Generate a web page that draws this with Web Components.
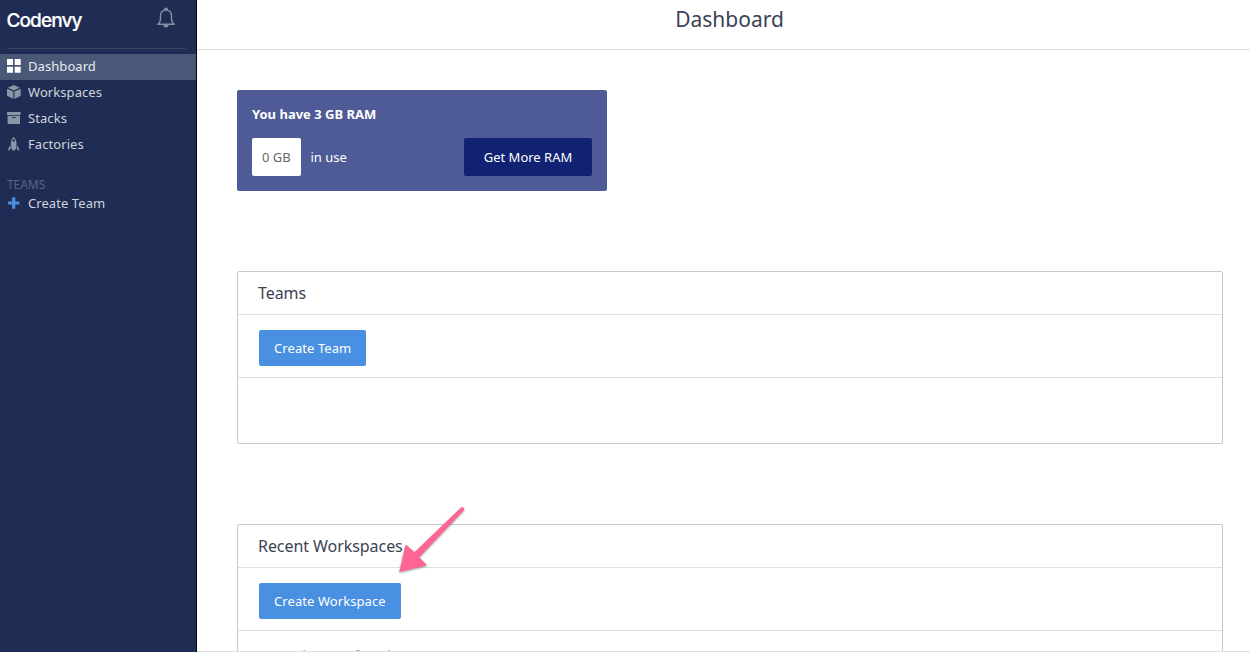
<!DOCTYPE html>
<html lang="en">
<head>
<meta charset="utf-8">
<title>Dashboard</title>
<style>
html,body{margin:0;height:100%;overflow:hidden}
body{font-family:"Noto Sans","Open Sans",sans-serif;font-size:13px;color:#3b4254}
</style>
</head>
<body>
<app-shell>
  <side-bar slot="nav">
    <nav-item active icon="grid">Dashboard</nav-item>
    <nav-item icon="cube">Workspaces</nav-item>
    <nav-item icon="box">Stacks</nav-item>
    <nav-item icon="rocket">Factories</nav-item>
    <nav-item slot="teams" icon="plus">Create Team</nav-item>
  </side-bar>
  <page-header>Dashboard</page-header>
  <ram-card></ram-card>
  <list-panel style="height:171px;margin-top:80px" heading="Teams" action="Create Team"></list-panel>
  <list-panel style="height:250px;margin-top:80px" heading="Recent Workspaces" action="Create Workspace">No workspaces found.</list-panel>
</app-shell>
<pointer-arrow></pointer-arrow>
<script>
const define = (name, html, setup) => customElements.define(name, class extends HTMLElement {
  constructor() {
    super();
    this.attachShadow({mode: 'open'}).innerHTML = html;
  }
  connectedCallback() { if (setup) setup(this, this.shadowRoot); }
});

define('app-shell', `<style>
:host{display:flex;height:652px;box-sizing:border-box;overflow:hidden}
main{flex:1;height:651px;overflow:hidden;border-bottom:1px solid #e0e0e0;background:#fff}
</style><slot name="nav"></slot><main><slot></slot></main>`);

define('side-bar', `<style>
:host{display:block;width:196px;flex:none;background:#1f2d54;border-right:1px solid #02040a}
header{display:flex;justify-content:space-between;height:48px;margin:0 10px 5px 7px;border-bottom:1px solid #3b4360}
.logo{font:500 19px/24px Inter,"Liberation Sans",sans-serif;letter-spacing:-.9px;color:#fff;-webkit-text-stroke:.2px #fff;margin-left:-.5px;padding-top:9px}
.bell{margin:7px 9px 0 0;width:22px;height:22px}
h2{font-size:12px;font-weight:400;line-height:16px;color:#5a6480;margin:19px 0 -2px 7px;letter-spacing:-.05px}
</style>
<header><span class="logo">Codenvy</span>
<svg class="bell" viewBox="0 0 22 22" fill="none" stroke="#8692a4" stroke-width="1.4"><path d="M9.8 3.2V2.5a1.2 1.2 0 0 1 2.4 0v.7M2.7 17.3c2.1-1.4 2.8-3.4 2.8-5.6V8.5C5.5 5.2 7.8 3 11 3s5.5 2.2 5.5 5.5v3.2c0 2.2.7 4.2 2.8 5.6z" stroke-linejoin="round"/><path d="M8.5 18a2.5 2.5 0 0 0 5 0z" fill="#8692a4" stroke="none"/></svg></header>
<nav><slot></slot></nav><h2>TEAMS</h2><slot name="teams"></slot>`);

const icons = {
  grid: '<path fill="#fff" d="M0 0h6v6H0zM7.7 0H13.7v6H7.7zM0 7.8h6V13.8H0zM7.7 7.8H13.7V13.8H7.7z"/>',
  cube: '<path fill="#8a95a5" d="M6.8 0l6 2.8-6 2.7-6-2.7zM0 3.8l6.3 2.8V14L0 10.8zM13.7 3.8L7.4 6.6V14l6.3-3.2z"/>',
  box: '<path fill="#8a95a5" d="M0 1h13.6v3H0zM.6 4.8H13V13H.6z"/><path fill="#1f2d54" d="M5 6h3.6v1H5z"/>',
  rocket: '<g transform="translate(-.3 0)"><path fill="#8a95a5" fill-rule="evenodd" d="M7 0C4.7 1.8 4 4.6 4.2 8L2 10.5 1.4 14l2.8-2h1L6 13.4h2l.8-1.4h1l2.8 2-.6-3.5L9.8 8C10 4.6 9.3 1.8 7 0zM7 2.2a1.2 1.2 0 0 1 0 2.5 1.2 1.2 0 0 1 0-2.5z"/><path stroke="#1f2d54" stroke-width=".7" d="M4.1 8.5v4M9.9 8.5v4"/></g>',
  plus: '<path fill="#4a90e2" d="M5.1 1.3h3.2v4.1h4.1v3.2H8.3v4.1H5.1V8.6H1V5.4h4.1z"/>'
};
define('nav-item', `<style>
:host{display:flex;align-items:center;height:26px;box-sizing:border-box;padding:0 0 2px 7px;gap:7px;color:#d0d3da;font-size:13px;line-height:18px;letter-spacing:.07px}
:host([active]){background:#4a5878;color:#e9ebef}
svg{width:14px;height:14px;flex:none}
</style><svg viewBox="0 0 14 14"></svg><span><slot></slot></span>`,
(el, root) => { root.querySelector('svg').innerHTML = icons[el.getAttribute('icon')]; });

define('page-header', `<style>
:host{display:flex;justify-content:center;height:49px;border-bottom:1px solid #e1e1e1}
h1{margin:5px 0 0 12px;font-size:21px;line-height:29px;font-weight:400;color:#3b4254}
</style><h1><slot></slot></h1>`);

define('ram-card', `<style>
:host{display:block;box-sizing:border-box;width:370px;height:101px;margin:40px 0 0 40px;padding:15px;background:#4f5b96;border-radius:2px;color:#fff}
b{display:block;line-height:18px;font-size:13px;margin-bottom:15px}
.row{display:flex;align-items:center;line-height:38px}
.used{box-sizing:border-box;width:48.6px;text-align:center;background:#fff;color:#686868;border-radius:2px;margin-right:9.8px}
button{margin:0 0 0 auto;width:128px;height:38px;border:0;border-radius:2px;background:#122272;color:#fff;font:inherit;padding:0}
</style><b>You have 3 GB RAM</b><div class="row"><span class="used">0 GB</span><span>in use</span><button>Get More RAM</button></div>`);

define('list-panel', `<style>
:host{display:block;width:984px;margin-left:40px;border:1px solid #c8c8c8;border-radius:2px}
h2{margin:0;font-size:16px;font-weight:400;line-height:42px;height:42px;letter-spacing:-.06px;padding-left:20px;border-bottom:1px solid #e1e1e1}
.bar{height:47px;padding:15px 0 0 21px;border-bottom:1px solid #e1e1e1}
button{height:36px;padding:0 15px;border:0;border-radius:2px;background:#4a90e2;color:#fff;font:inherit;font-size:13px;letter-spacing:.08px}
.body{padding:15px 20px;line-height:18px;color:#999}
</style><h2></h2><div class="bar"><button></button></div><div class="body"><slot></slot></div>`,
(el, root) => {
  root.querySelector('h2').textContent = el.getAttribute('heading');
  root.querySelector('button').textContent = el.getAttribute('action');
});

define('pointer-arrow', `<style>
:host{position:absolute;left:390px;top:500px;width:84px;height:82px;pointer-events:none}
svg{display:block;filter:drop-shadow(0 1px 1px rgba(0,0,0,.4))}
</style><svg width="84" height="82"><path fill="#ff6492" d="M71.3 7.3Q74.5 6.6 74.2 9.7L29.2 57.2 37 65.3 9.3 72 15.7 44.4 24.5 52.2z"/></svg>`);
</script>
</body>
</html>
